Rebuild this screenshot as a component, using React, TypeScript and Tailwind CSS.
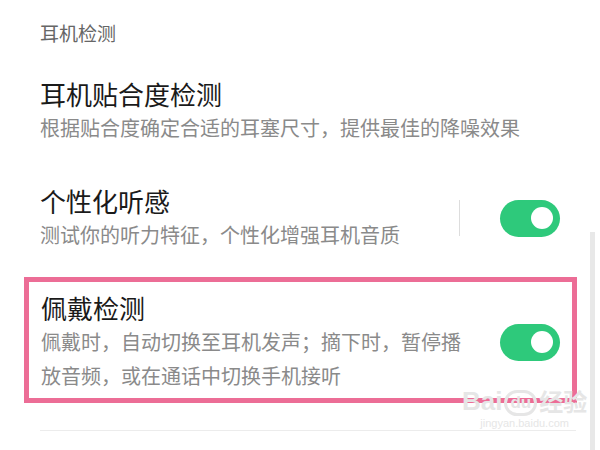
import React from "react";

const font = { fontFamily: '"Noto Sans CJK SC", "Noto Sans", sans-serif' };

function Toggle() {
  return (
    <div className="flex h-[37px] w-[60px] shrink-0 items-center justify-end rounded-full bg-[#2ec97b] pr-[7px]">
      <div className="h-[22px] w-[22px] rounded-full bg-white" />
    </div>
  );
}

export default function App() {
  return (
    <div className="relative h-[450px] w-[600px] overflow-hidden bg-white" style={font}>
      <div className="flex flex-col pt-[21px]">
        <div className="pl-[40px] text-[19px] leading-[24px] text-[#666666]">耳机检测</div>

        <div className="mt-[32px] pl-[40px]">
          <div className="text-[26px] leading-[34px] text-[#1a1a1a]">耳机贴合度检测</div>
          <div className="text-[20px] leading-[34px] text-[#8a8a8a]">
            根据贴合度确定合适的耳塞尺寸，提供最佳的降噪效果
          </div>
        </div>

        <div className="mt-[39px] flex items-center pl-[40px] pr-[40px]">
          <div className="flex-1">
            <div className="text-[26px] leading-[34px] text-[#1a1a1a]">个性化听感</div>
            <div className="text-[20px] leading-[34px] text-[#8a8a8a]">测试你的听力特征，个性化增强耳机音质</div>
          </div>
          <div className="mr-[40px] h-[36px] w-px bg-[#dddddd]" />
          <Toggle />
        </div>

        <div className="ml-[24px] mt-[25px] w-[553px] border-[5px] border-[#ec6d96] pb-[5px] pl-[12px] pr-[12px] pt-[9px]">
          <div className="flex items-center justify-between">
            <div className="w-[425px]">
              <div className="text-[26px] leading-[34px] text-[#1a1a1a]">佩戴检测</div>
              <div className="text-[20px] leading-[34px] text-[#8a8a8a]">
                佩戴时，自动切换至耳机发声；摘下时，暂停播放音频，或在通话中切换手机接听
              </div>
            </div>
            <Toggle />
          </div>
        </div>

        <div className="ml-[40px] mr-[24px] mt-[27px] h-px bg-[#ececec]" />
      </div>

      {/* scrollbar */}
      <div className="absolute right-[5px] top-[232px] h-[230px] w-[5px] bg-[#e8e8e8]" />

      {/* watermark */}
      <div className="pointer-events-none absolute left-[462px] top-[386px] flex flex-col items-center text-[#e6e6e6]">
        <div className="flex items-end gap-[2px] text-[26px] font-bold leading-[30px]" style={{ fontFamily: '"Liberation Sans", sans-serif' }}>
          <span>Bai</span>
          <span className="rounded-full border-[3px] border-[#e6e6e6] px-[3px] text-[17px] leading-[20px]">du</span>
          <span className="text-[24px]" style={font}>经验</span>
        </div>
        <div className="text-[11px] leading-[14px]" style={{ fontFamily: '"Liberation Sans", sans-serif' }}>jingyan.baidu.com</div>
      </div>
    </div>
  );
}
